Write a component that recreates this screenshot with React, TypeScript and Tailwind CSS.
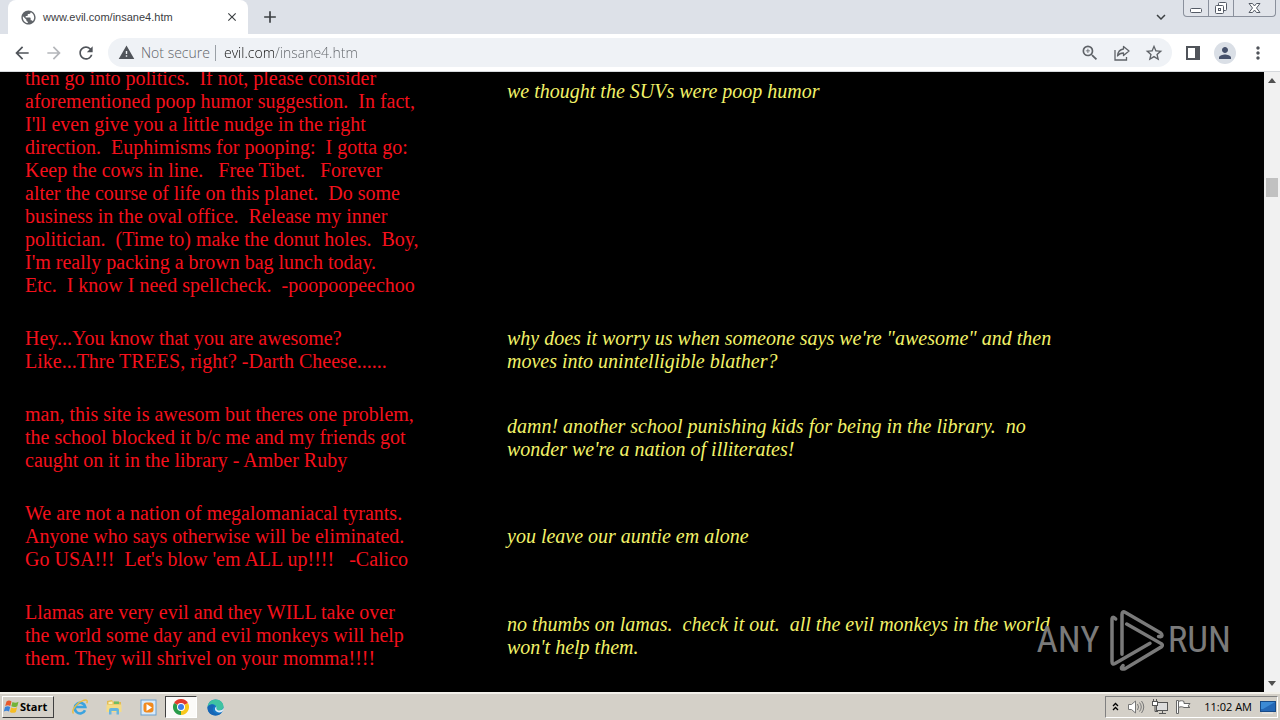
import React from "react";
import {
  MdPublic, MdClose, MdAdd, MdArrowBack, MdArrowForward, MdRefresh, MdWarning,
  MdZoomIn, MdStarOutline, MdPerson, MdMoreVert, MdExpandMore,
} from "react-icons/md";

const comments: { id: string; visitor: string; reply: string }[] = [
  {
    id: "poopoopeechoo",
    visitor:
      "then go into politics.  If not, please consider\naforementioned poop humor suggestion.  In fact,\nI'll even give you a little nudge in the right\ndirection.  Euphimisms for pooping:  I gotta go:\nKeep the cows in line.   Free Tibet.   Forever\nalter the course of life on this planet.  Do some\nbusiness in the oval office.  Release my inner\npolitician.  (Time to) make the donut holes.  Boy,\nI'm really packing a brown bag lunch today.\nEtc.  I know I need spellcheck.  -poopoopeechoo",
    reply: "we thought the SUVs were poop humor",
  },
  {
    id: "darth",
    visitor: "Hey...You know that you are awesome?\nLike...Thre TREES, right? -Darth Cheese......",
    reply: "why does it worry us when someone says we're \"awesome\" and then\nmoves into unintelligible blather?",
  },
  {
    id: "amber",
    visitor:
      "man, this site is awesom but theres one problem,\nthe school blocked it b/c me and my friends got\ncaught on it in the library - Amber Ruby",
    reply: "damn! another school punishing kids for being in the library.  no\nwonder we're a nation of illiterates!",
  },
  {
    id: "calico",
    visitor:
      "We are not a nation of megalomaniacal tyrants.\nAnyone who says otherwise will be eliminated.\nGo USA!!!  Let's blow 'em ALL up!!!!   -Calico",
    reply: "you leave our auntie em alone",
  },
  {
    id: "llamas",
    visitor:
      "Llamas are very evil and they WILL take over\nthe world some day and evil monkeys will help\nthem. They will shrivel on your momma!!!!",
    reply: "no thumbs on lamas.  check it out.  all the evil monkeys in the world\nwon't help them.",
  },
];

function WindowControls() {
  const cell = "flex h-full items-center justify-center";
  return (
    <div className="mr-1 flex h-[17px] w-[93px] rounded-b border border-t-0 border-[#8a909c] bg-[#e1e4ea]">
      <button aria-label="Minimize" className={`${cell} w-[25px] border-r border-[#8a909c]`}>
        <svg width="13" height="14" viewBox="0 0 13 14" fill="#fff" stroke="#555b66"><rect x=".5" y="7.5" width="11" height="4" rx="1" /></svg>
      </button>
      <button aria-label="Restore" className={`${cell} w-[25px] border-r border-[#8a909c]`}>
        <svg width="14" height="14" viewBox="0 0 14 14" fill="#fff" stroke="#555b66">
          <rect x="4.500" y="1.500" width="8" height="8" rx="1" />
          <rect x="1.500" y="4.500" width="8" height="8" rx="1" /><rect x="4.500" y="7.500" width="2" height="2" />
        </svg>
      </button>
      <button aria-label="Close window" className={`${cell} flex-1`}>
        <svg width="13" height="14" viewBox="0 0 13 14" fill="#fff" stroke="#555b66">
          <path d="M1 2.500h3.500l2 2.500 2-2.500H12L8.500 7l3.500 4.500H8.500l-2-2.500-2 2.500H1L4.500 7z" />
        </svg>
      </button>
    </div>
  );
}

function TabStrip() {
  return (
    <div className="flex h-[34px] shrink-0 items-start bg-[#dde1e8] pl-2">
      <div className="flex h-full w-60 items-center rounded-t-lg bg-white pl-3 pr-2 text-[#3c4043]">
        <MdPublic size={17} color="#5f6368" />
        <span className="ml-[6px] flex-1 font-['Liberation_Sans',sans-serif] text-[11px] leading-4">www.evil.com/insane4.htm</span>
        <button aria-label="Close tab" className="flex size-4 items-center justify-center"><MdClose size={14} color="#3c4043" /></button>
      </div>
      <button aria-label="New tab" className="ml-3 flex h-full w-5 items-center justify-center"><MdAdd size={20} color="#3c4043" /></button>
      <div className="flex-1" />
      <button aria-label="Search tabs" className="mr-3 flex h-full w-5 items-center justify-center"><MdExpandMore size={18} color="#3c4043" /></button>
      <WindowControls />
    </div>
  );
}

function Toolbar() {
  return (
    <div className="flex h-[38px] shrink-0 items-center border-b border-[#d5d8dc] bg-white pl-3 pr-3 text-[#5f6368]">
      <button aria-label="Back"><MdArrowBack size={20} color="#50545a" /></button>
      <button aria-label="Forward" className="ml-3"><MdArrowForward size={20} color="#b4b6ba" /></button>
      <button aria-label="Reload" className="ml-3"><MdRefresh size={20} color="#50545a" /></button>
      <div className="ml-3 flex h-[29px] flex-1 items-center rounded-full bg-[#eff2f6] pl-[10px] pr-2 font-['Open_Sans',sans-serif] text-[14px] font-light leading-5">
        <MdWarning size={17} color="#50545a" />
        <label htmlFor="address" className="ml-[6px] w-[75px] whitespace-nowrap border-r border-[#9aa0a6] leading-4">Not secure</label>
        <input
          id="address"
          defaultValue="evil.com/insane4.htm"
          className="ml-2 min-w-0 flex-1 bg-[linear-gradient(90deg,#111_51px,#5f6368_51px)] bg-clip-text font-light text-transparent outline-none"
        />
        <div className="flex items-center gap-3">
          <button aria-label="Zoom"><MdZoomIn size={20} /></button>
          <button aria-label="Share">
            <svg width="20" height="20" viewBox="0 0 20 20" fill="none" stroke="currentColor" strokeWidth="1.300">
              <path d="M3 7v10h11.500V14" />
              <path d="M11.500 3.500L17 8l-5.500 4.500V10c-2.800 0-4.500.7-6 3 .3-4 2.500-6.500 6-7z" strokeLinejoin="round" />
            </svg>
          </button>
          <button aria-label="Bookmark this page"><MdStarOutline size={20} /></button>
        </div>
      </div>
      <button aria-label="Side panel" className="ml-3">
        <svg width="18" height="18" viewBox="0 0 18 18"><rect x="3" y="3" width="12" height="12" fill="none" stroke="#50545a" strokeWidth="2" /><rect x="11" y="2" width="5" height="14" fill="#50545a" /></svg>
      </button>
      <button aria-label="Profile" className="ml-3 flex size-[22px] items-center justify-center rounded-full bg-[#dadfe6]"><MdPerson size={18} color="#45506a" /></button>
      <button aria-label="Menu" className="ml-3"><MdMoreVert size={20} color="#50545a" /></button>
    </div>
  );
}

function Scrollbar() {
  return (
    <div className="flex w-4 shrink-0 flex-col items-center bg-[#f1f1f1]">
      <button aria-label="Scroll up" className="flex h-[17px] w-4 items-center justify-center">
        <svg width="8" height="5" viewBox="0 0 8 5"><path d="M0 5l4-5 4 5z" fill="#505050" /></svg>
      </button>
      <div className="flex w-full flex-1 flex-col items-center pt-[89px]"><div className="h-[19px] w-3 bg-[#c1c1c1]" /></div>
      <button aria-label="Scroll down" className="flex h-[17px] w-4 items-center justify-center">
        <svg width="8" height="5" viewBox="0 0 8 5"><path d="M0 0l4 5 4-5z" fill="#505050" /></svg>
      </button>
    </div>
  );
}

function Watermark() {
  return (
    <div className="absolute bottom-5 right-[49px] flex items-center text-[#7a7a7a]">
      <span className="font-['Roboto_Condensed','Liberation_Sans_Narrow',sans-serif] text-[37px] leading-[50px]">ANY</span>
      <svg width="56" height="64" viewBox="0 0 56 64" className="ml-2 mr-1" fill="none" stroke="currentColor" strokeWidth="3.500" strokeLinecap="round">
        <path d="M7.700 11Q4 7.500 4 11.500V53.500Q4 57 7 55.500L42 35.300" />
        <path d="M14 46.300V6.500Q14 2.500 17.500 4.500L52.500 24.800Q55.500 28 52.500 28.700L50.500 28.500" />
        <path d="M18.700 16L53.500 35.800Q55 37.300 53.500 38.800L17.500 60.500Q13 62 13.500 59.500L15 57.500" />
      </svg>
      <span className="font-['Roboto_Condensed','Liberation_Sans_Narrow',sans-serif] text-[37px] leading-[50px]">RUN</span>
    </div>
  );
}

function Page() {
  return (
    <main className="relative flex min-h-0 flex-1 overflow-hidden bg-black">
      <div className="min-w-0 flex-1 overflow-hidden">
        <table className="-mt-5 w-full table-fixed border-collapse whitespace-pre text-left font-['Liberation_Serif',serif] text-[20px] leading-[23px]">
          <colgroup><col className="w-[507px]" /><col /></colgroup>
          <tbody>
            {comments.map((c, i) => (
              <tr key={c.id}>
                <td className="py-[15px] pl-[25px] align-middle text-[#f5101c]">{c.visitor}</td>
                <td className={i === 0 ? "pt-7 align-top italic text-[#f2f268]" : "py-[15px] align-middle italic text-[#f2f268]"}>{c.reply}</td>
              </tr>
            ))}
          </tbody>
        </table>
      </div>
      <Scrollbar />
      <Watermark />
    </main>
  );
}

function ChromeLogo() {
  return (
    <svg width="16" height="16" viewBox="0 0 16 16">
      <path d="M8 8L1.070 4A8 8 0 0 1 14.930 4z" fill="#e23b2e" />
      <path d="M8 8L14.930 4A8 8 0 0 1 8 16z" fill="#f9c81c" />
      <path d="M8 8L8 16A8 8 0 0 1 1.070 4z" fill="#2a9c4a" />
      <circle cx="8" cy="8" r="4" fill="#fff" /><circle cx="8" cy="8" r="3" fill="#3d7de8" />
    </svg>
  );
}

function Taskbar() {
  return (
    <footer className="flex h-7 shrink-0 items-center border-t-2 border-[#f2f0ea] bg-[#d4d0c8] font-['Open_Sans',sans-serif] text-[11px] leading-4 text-black">
      <button className="ml-[2px] flex h-[22px] w-[52px] items-center border border-b-[#404040] border-l-white border-r-[#404040] border-t-white font-bold">
        <svg width="17" height="16" viewBox="0 0 17 16">
          <path d="M3.500 2.500C5.500 1 7 1.500 8.500 2.500L7.300 7C5.600 6 4.200 6 2.200 7z" fill="#e8592b" />
          <path d="M9.500 3c2 1 3.800 1 6-.3L14.300 7.200c-2 1.200-4 1.200-6 .1z" fill="#72b33a" />
          <path d="M2 8c2-1 3.600-1 5.200.1L6 12.500C4.300 11.500 2.800 11.500.800 12.600z" fill="#3c83d8" />
          <path d="M8.100 8.500c2 1 4 1 6-.2L12.900 13c-2 1.200-4 1.100-6 0z" fill="#f6bd25" />
        </svg>
        Start
      </button>
      <nav aria-label="Pinned programs" className="ml-[9px] flex items-center">
        <button aria-label="Internet Explorer" className="flex h-[22px] w-[34px] items-center justify-center">
          <svg width="18" height="18" viewBox="0 0 18 18" fill="none">
            <path d="M14 12.200A5.300 5.300 0 1 1 14.300 9H5" stroke="#3ba3df" strokeWidth="2.600" />
            <path d="M2.500 15.500C-.500 12 7 4 13 2.200c3-.8 3.800.7 2.800 3" stroke="#e8bd43" strokeWidth="1.400" />
          </svg>
        </button>
        <button aria-label="Explorer" className="flex h-[22px] w-[34px] items-center justify-center">
          <svg width="18" height="18" viewBox="0 0 18 18">
            <path d="M2 3l5-1 1 1.500 8 .5v9H2z" fill="#e3bc55" />
            <path d="M3.500 4l4-.5V6h-4z" fill="#fbf0b8" /><path d="M9 3.500h5V6H9z" fill="#72bd60" />
            <path d="M1.500 6.500h15V14h-15z" fill="#f5dc86" />
            <path d="M4 16.500V12q0-2 2-2h6q2 0 2 2v4.500h-2.500V13h-5v3.500z" fill="#67b5dd" />
          </svg>
        </button>
        <button aria-label="Media Player" className="flex h-[22px] w-[34px] items-center justify-center">
          <svg width="17" height="17" viewBox="0 0 17 17">
            <rect x="1" y="1" width="15" height="15" fill="#d8eafa" stroke="#6a9fce" /><rect x="3.500" y="3.500" width="10" height="10" rx="3" fill="#f28a1d" /><path d="M6.500 5l5.500 3.500L6.500 12z" fill="#fff" />
          </svg>
        </button>
        <button aria-label="Google Chrome" className="flex h-[22px] w-8 items-center justify-center border border-b-white border-l-[#404040] border-r-white border-t-[#404040] bg-[#fbfaf8]"><ChromeLogo /></button>
        <button aria-label="Microsoft Edge" className="flex h-[22px] w-9 items-center justify-center">
          <svg width="17" height="17" viewBox="0 0 17 17">
            <circle cx="8.500" cy="8.500" r="8" fill="#1678c8" />
            <path d="M.500 8C1 3.500 4.500.500 8.500.500c5 0 8 3.500 8 7 0 3-2.500 4.200-5 4-2 0-2.500-1-2-2C10 7 7 4.500 4 5.500 2 6 1 7 .500 8z" fill="#3fc3a2" />
            <path d="M.500 8C2 5 6 4.500 8 7c-2 .5-3 3-1.500 5.500 2 3 6 3 8.500.500-1.500 2.500-4 3.500-6.500 3.500-5 0-8.500-4-8-8.500z" fill="#1765b5" />
            <path d="M9.500 7.500c-.6 2.500.5 4 2.500 4 2.200 0 3.500-.7 4.500-2.200.2 1.200-.3 2.700-1.500 3.500-3 1.500-6.500 0-7-2.300-.2-1.500.4-2.500 1.500-3z" fill="#dfeefa" />
          </svg>
        </button>
      </nav>
      <div className="flex-1" />
      <div className="mr-[2px] flex h-[22px] items-center border border-b-white border-l-[#808080] border-r-white border-t-[#808080] pl-[6px] pr-[1px]">
        <button aria-label="Show hidden icons">
          <svg width="7" height="10" viewBox="0 0 7 10" fill="none" stroke="#000" strokeWidth="1.300"><path d="M1 4l2.500-2.500L6 4M1 8l2.500-2.500L6 8" /></svg>
        </button>
        <button aria-label="Volume" className="ml-2">
          <svg width="18" height="16" viewBox="0 0 18 16" fill="none" stroke="#777"><path d="M1.500 5.500h3L8.500 2v12l-4-3.500h-3z" fill="#fff" /><path d="M10.500 5q2 3 0 6M12.500 3.500q3.500 4.500 0 9M14.500 2q4.500 6 0 12" /></svg>
        </button>
        <button aria-label="Network" className="ml-[6px]">
          <svg width="18" height="16" viewBox="0 0 18 16" fill="#fff" stroke="#555"><rect x="5.500" y="3.500" width="11" height="8" fill="#ddd" /><path d="M8 14.500h7M11.500 12v2" /><rect x="1.500" y="2.500" width="5" height="4" /><path d="M2.500 0v2M5.500 0v2M4 7v5.500h3" fill="none" /></svg>
        </button>
        <button aria-label="Action center" className="ml-[6px]">
          <svg width="17" height="16" viewBox="0 0 17 16" fill="#fff" stroke="#666"><path d="M1.500 1.500h2v13h-2z" /><path d="M3.500 2.500c2-1 4-1 5.500 0v2h6l-2 2.500 2 1.500H9c-2-1-3.500-1-5.500 0z" /></svg>
        </button>
        <time className="ml-3 whitespace-nowrap">11:02 AM</time>
        <button aria-label="Show desktop" className="ml-2">
          <svg width="16" height="14" viewBox="0 0 16 14"><rect x=".5" y="1.500" width="15" height="10" fill="#2467b5" stroke="#174a87" /><path d="M1 2h14L3 9H1z" fill="#3c8ad5" /><path d="M2 13h11" stroke="#eee" /></svg>
        </button>
      </div>
    </footer>
  );
}

export default function App() {
  return (
    <div className="flex h-screen flex-col overflow-hidden bg-white">
      <TabStrip />
      <Toolbar />
      <Page />
      <Taskbar />
    </div>
  );
}
